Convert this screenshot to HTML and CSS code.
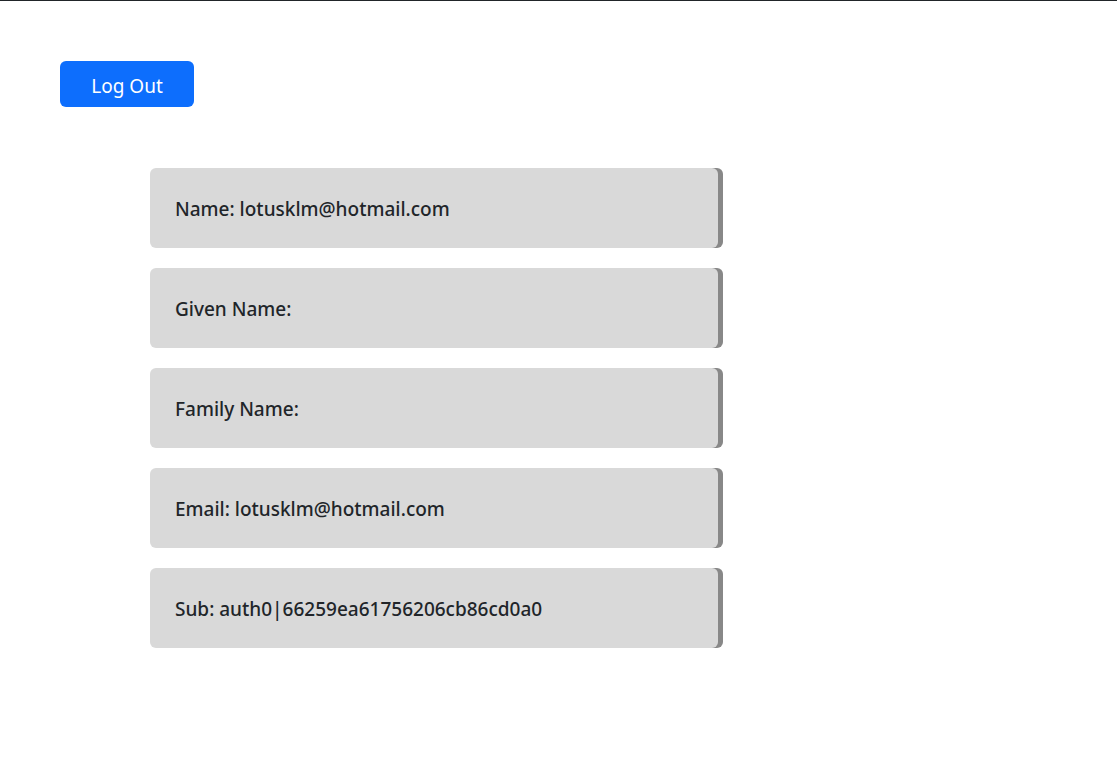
FILE: index.html
```html
<!DOCTYPE html>
<html>
<head>
<meta charset="utf-8">
<link rel="stylesheet" href="styles.css">
</head>
<body>
<div class="page">
  <div class="top">
    <button class="btn-logout">Log Out</button>
  </div>
  <div class="cards">
    <div class="card">Name: lotusklm@hotmail.com</div>
    <div class="card">Given Name:</div>
    <div class="card">Family Name:</div>
    <div class="card">Email: lotusklm@hotmail.com</div>
    <div class="card">Sub: auth0|66259ea61756206cb86cd0a0</div>
  </div>
</div>
</body>
</html>
```
FILE: styles.css
```css
html, body {
  margin: 0;
  padding: 0;
  background: #fff;
}
body {
  border-top: 1px solid #212529;
  font-family: "Noto Sans", "Open Sans", sans-serif;
  color: #212529;
}
.page {
  padding: 60px 60px 0 60px;
}
.top {
  display: flex;
}
.btn-logout {
  box-sizing: border-box;
  background: #0d6efd;
  color: #fff;
  border: none;
  border-radius: 6px;
  font-family: inherit;
  font-size: 19px;
  line-height: 30px;
  padding: 10px 0 6px;
  width: 134px;
  height: 46px;
}
.cards {
  display: flex;
  flex-direction: column;
  gap: 20px;
  margin-top: 61px;
  margin-left: 90px;
}
.card {
  box-sizing: border-box;
  width: 568px;
  height: 80px;
  background: #d9d9d9;
  border-radius: 6px;
  box-shadow: 5px 0 0 #888;
  padding: 2px 25px 0;
  display: flex;
  align-items: center;
  font-size: 19px;
  font-weight: 500;
}
```
